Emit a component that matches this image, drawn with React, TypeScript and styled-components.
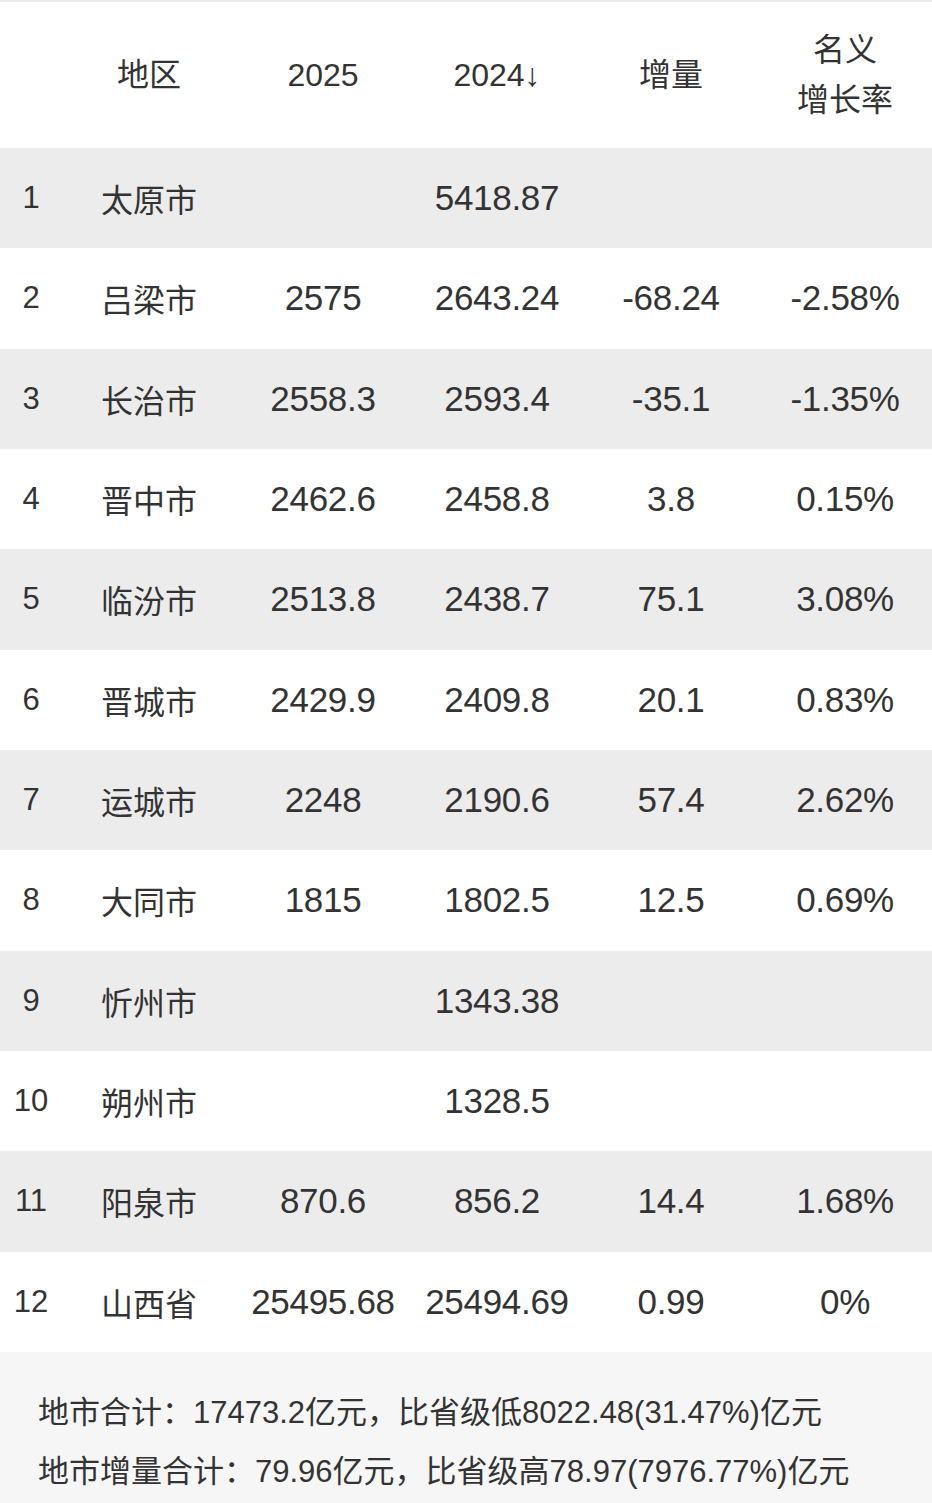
import React from 'react';
import styled, { createGlobalStyle } from 'styled-components';

const GlobalStyle = createGlobalStyle`
  html, body {
    margin: 0;
    padding: 0;
    background: #ffffff;
  }
  body {
    font-family: "Liberation Sans", Arial, "Noto Sans CJK SC", sans-serif;
    color: #333333;
  }
`;

const Page = styled.div`
  width: 932px;
  border-top: 2px solid #ebebeb;
  background: #ffffff;
`;

const HeaderRow = styled.div`
  display: grid;
  grid-template-columns: 62px repeat(5, 1fr);
  height: 146px;
  align-items: center;
  background: #ffffff;
`;

const HeaderCell = styled.div`
  text-align: center;
  font-size: 32px;
  line-height: 50px;
  color: #333333;
  font-family: "Liberation Sans", Arial, "Noto Sans CJK SC", sans-serif;
`;

const Row = styled.div<{ $shaded: boolean }>`
  display: grid;
  grid-template-columns: 62px repeat(5, 1fr);
  height: 100.33px;
  align-items: center;
  background: ${(p) => (p.$shaded ? '#ececec' : '#ffffff')};
`;

const IndexCell = styled.div`
  text-align: center;
  font-size: 31px;
  color: #333333;
`;

const NameCell = styled.div`
  text-align: center;
  font-size: 32px;
  color: #333333;
  font-family: "Noto Sans CJK SC", sans-serif;
`;

const NumCell = styled.div`
  text-align: center;
  font-size: 35px;
  color: #333333;
  letter-spacing: -0.3px;
`;

const Footer = styled.div`
  background: #f6f6f6;
  height: 151px;
  padding: 31px 0 0 38px;
  box-sizing: border-box;
`;

const FooterLine = styled.div`
  font-size: 31px;
  line-height: 59px;
  color: #333333;
  white-space: nowrap;
`;

type Item = {
  name: string;
  y2025: string;
  y2024: string;
  delta: string;
  rate: string;
};

const rows: Item[] = [
  { name: '太原市', y2025: '', y2024: '5418.87', delta: '', rate: '' },
  { name: '吕梁市', y2025: '2575', y2024: '2643.24', delta: '-68.24', rate: '-2.58%' },
  { name: '长治市', y2025: '2558.3', y2024: '2593.4', delta: '-35.1', rate: '-1.35%' },
  { name: '晋中市', y2025: '2462.6', y2024: '2458.8', delta: '3.8', rate: '0.15%' },
  { name: '临汾市', y2025: '2513.8', y2024: '2438.7', delta: '75.1', rate: '3.08%' },
  { name: '晋城市', y2025: '2429.9', y2024: '2409.8', delta: '20.1', rate: '0.83%' },
  { name: '运城市', y2025: '2248', y2024: '2190.6', delta: '57.4', rate: '2.62%' },
  { name: '大同市', y2025: '1815', y2024: '1802.5', delta: '12.5', rate: '0.69%' },
  { name: '忻州市', y2025: '', y2024: '1343.38', delta: '', rate: '' },
  { name: '朔州市', y2025: '', y2024: '1328.5', delta: '', rate: '' },
  { name: '阳泉市', y2025: '870.6', y2024: '856.2', delta: '14.4', rate: '1.68%' },
  { name: '山西省', y2025: '25495.68', y2024: '25494.69', delta: '0.99', rate: '0%' },
];

const App: React.FC = () => {
  return (
    <>
      <GlobalStyle />
      <Page>
        <HeaderRow>
          <HeaderCell />
          <HeaderCell>地区</HeaderCell>
          <HeaderCell>2025</HeaderCell>
          <HeaderCell>2024↓</HeaderCell>
          <HeaderCell>增量</HeaderCell>
          <HeaderCell>
            名义
            <br />
            增长率
          </HeaderCell>
        </HeaderRow>
        {rows.map((r, i) => (
          <Row key={r.name} $shaded={i % 2 === 0}>
            <IndexCell>{i + 1}</IndexCell>
            <NameCell>{r.name}</NameCell>
            <NumCell>{r.y2025}</NumCell>
            <NumCell>{r.y2024}</NumCell>
            <NumCell>{r.delta}</NumCell>
            <NumCell>{r.rate}</NumCell>
          </Row>
        ))}
        <Footer>
          <FooterLine>地市合计：17473.2亿元，比省级低8022.48(31.47%)亿元</FooterLine>
          <FooterLine>地市增量合计：79.96亿元，比省级高78.97(7976.77%)亿元</FooterLine>
        </Footer>
      </Page>
    </>
  );
};

export default App;
